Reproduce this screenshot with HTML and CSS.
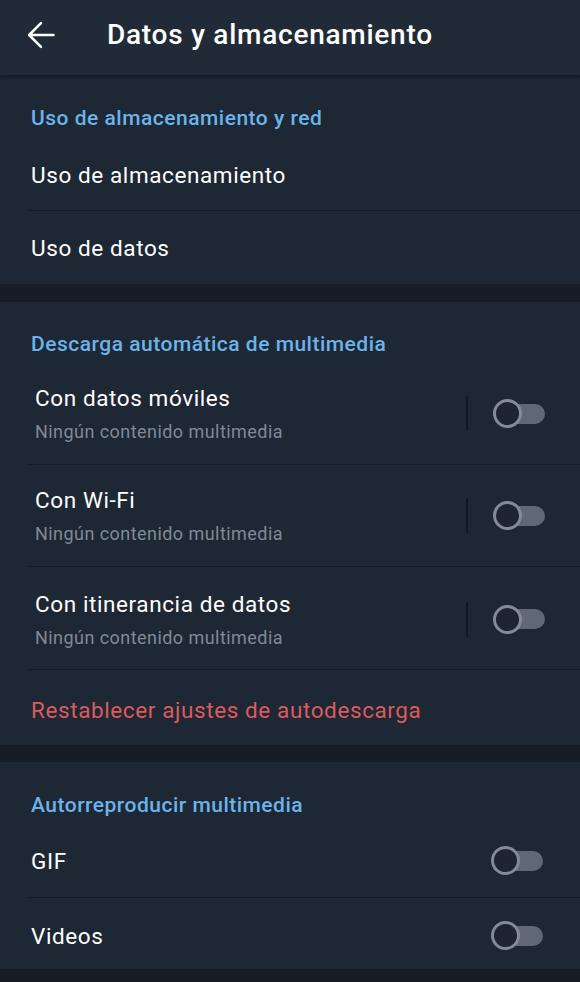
FILE: index.html
```html
<!DOCTYPE html>
<html lang="es">
<head>
<meta charset="utf-8">
<title>Datos y almacenamiento</title>
<link rel="stylesheet" href="styles.css">
</head>
<body>
<div class="screen">
  <header class="topbar">
    <svg class="back" width="30" height="30" viewBox="0 0 24 24" aria-hidden="true">
      <path d="M22 12H3M12 2.5L2.5 12 12 21.5" fill="none" stroke="#ffffff" stroke-width="2" stroke-linecap="round" stroke-linejoin="round"/>
    </svg>
    <h1 class="title">Datos y almacenamiento</h1>
  </header>

  <section class="section s1">
    <h2 class="sec-title">Uso de almacenamiento y red</h2>
    <div class="row simple r-storage">Uso de almacenamiento</div>
    <div class="row simple r-data last">Uso de datos</div>
  </section>

  <div class="band band1"></div>

  <section class="section s2">
    <h2 class="sec-title">Descarga automática de multimedia</h2>
    <div class="row toggle-row">
      <div class="texts">
        <div class="main">Con datos móviles</div>
        <div class="sub">Ningún contenido multimedia</div>
      </div>
      <span class="vsep"></span>
      <span class="switch"><span class="knob"></span></span>
    </div>
    <div class="row toggle-row">
      <div class="texts">
        <div class="main">Con Wi-Fi</div>
        <div class="sub">Ningún contenido multimedia</div>
      </div>
      <span class="vsep"></span>
      <span class="switch"><span class="knob"></span></span>
    </div>
    <div class="row toggle-row tr-last">
      <div class="texts">
        <div class="main">Con itinerancia de datos</div>
        <div class="sub">Ningún contenido multimedia</div>
      </div>
      <span class="vsep"></span>
      <span class="switch"><span class="knob"></span></span>
    </div>
    <div class="row simple reset last">Restablecer ajustes de autodescarga</div>
  </section>

  <div class="band band2"></div>

  <section class="section s3">
    <h2 class="sec-title">Autorreproducir multimedia</h2>
    <div class="row simple play r-gif">
      <span>GIF</span>
      <span class="switch"><span class="knob"></span></span>
    </div>
    <div class="row simple play r-video last">
      <span>Videos</span>
      <span class="switch"><span class="knob"></span></span>
    </div>
  </section>

  <div class="band band3"></div>
</div>
</body>
</html>
```

FILE: styles.css
```css
* { box-sizing: border-box; }

html, body {
  margin: 0;
  padding: 0;
  background: #1e2734;
}

body {
  font-family: Roboto, "Noto Sans", "Liberation Sans", sans-serif;
  color: #ffffff;
  width: 580px;
  height: 982px;
  overflow: hidden;
}

.screen {
  display: flex;
  flex-direction: column;
}

.topbar {
  height: 75px;
  background: #212b38;
  display: flex;
  align-items: center;
  padding-left: 26px;
  padding-bottom: 5px;
  box-shadow: 0 2px 3px rgba(0, 0, 0, 0.35);
  position: relative;
  z-index: 1;
}

.back {
  display: block;
  flex: none;
}

.title {
  margin: 0 0 0 51px;
  font-size: 28px;
  font-weight: 500;
  letter-spacing: 0.75px;
  line-height: 32px;
  color: #ffffff;
}

.section {
  background: #1e2734;
  display: flex;
  flex-direction: column;
}

.sec-title {
  margin: 0;
  padding: 31px 0 0 31px;
  height: 66px;
  font-size: 21px;
  font-weight: 500;
  letter-spacing: 0.5px;
  line-height: 24px;
  color: #6cb3ea;
}

.s2 .sec-title { padding-top: 30px; height: 61px; }
.s3 .sec-title { padding-top: 31px; height: 61px; }

.row {
  margin-left: 28px;
  border-bottom: 1px solid #161d26;
  display: flex;
  align-items: center;
}

.row.last { border-bottom: none; }

.simple {
  padding-left: 3px;
  font-size: 22.5px;
  letter-spacing: 0.6px;
  line-height: 28px;
  color: #ffffff;
}

.r-storage { height: 70px; padding-bottom: 1px; }
.r-data { height: 73px; }

.toggle-row {
  height: 102px;
  padding-left: 7px;
}

.tr-last { height: 103px; padding-top: 2px; }

.texts {
  flex: 1;
  display: flex;
  flex-direction: column;
  gap: 9px;
}

.main {
  font-size: 22.5px;
  letter-spacing: 0.6px;
  line-height: 28px;
  color: #ffffff;
}

.sub {
  font-size: 18px;
  letter-spacing: 0.45px;
  line-height: 22px;
  color: #808a96;
}

.vsep {
  width: 2px;
  height: 35px;
  background: #131920;
  margin-right: 26px;
}

.switch {
  position: relative;
  width: 51px;
  height: 20px;
  border-radius: 10px;
  background: #5f6874;
  margin-right: 35px;
  flex: none;
}

.knob {
  position: absolute;
  left: -1px;
  top: -4.5px;
  width: 29px;
  height: 29px;
  border-radius: 50%;
  background: #1c2531;
  border: 3px solid #838b96;
}

.reset {
  height: 75px;
  padding-top: 5px;
  color: #dc5b5e;
}

.band {
  height: 17px;
  background: #171d26;
}

.band1 { height: 18px; }

.play {
  justify-content: space-between;
}

.play .switch { margin-right: 37px; }

.r-gif { height: 75px; padding-top: 1px; }
.r-video { height: 71px; padding-top: 4px; }

.band3 { height: 14px; }
```
